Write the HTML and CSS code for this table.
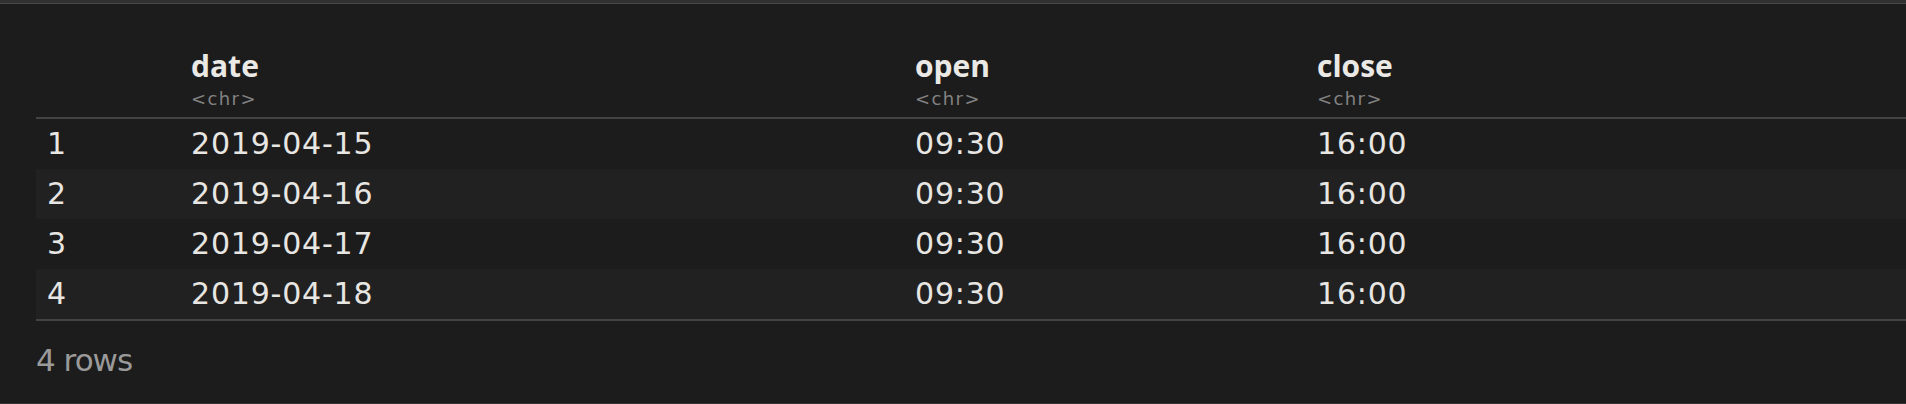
FILE: index.html
```html
<!DOCTYPE html>
<html lang="en">
<head>
  <meta charset="UTF-8" />
  <meta name="viewport" content="width=device-width, initial-scale=1" />
  <title>Data frame</title>
  <link rel="stylesheet" href="styles.css">
</head>
<body>

  <div class="top-bar"></div>

  <div class="frame">
    <div class="df-head">
      <div class="cell"></div>
      <div class="cell"><span class="col-name">date</span><span class="col-type">&lt;chr&gt;</span></div>
      <div class="cell"><span class="col-name">open</span><span class="col-type">&lt;chr&gt;</span></div>
      <div class="cell"><span class="col-name">close</span><span class="col-type">&lt;chr&gt;</span></div>
    </div>

    <div class="df-body">
      <div class="df-row">
        <div class="cell">1</div>
        <div class="cell">2019-04-15</div>
        <div class="cell">09:30</div>
        <div class="cell">16:00</div>
      </div>
      <div class="df-row">
        <div class="cell">2</div>
        <div class="cell">2019-04-16</div>
        <div class="cell">09:30</div>
        <div class="cell">16:00</div>
      </div>
      <div class="df-row">
        <div class="cell">3</div>
        <div class="cell">2019-04-17</div>
        <div class="cell">09:30</div>
        <div class="cell">16:00</div>
      </div>
      <div class="df-row">
        <div class="cell">4</div>
        <div class="cell">2019-04-18</div>
        <div class="cell">09:30</div>
        <div class="cell">16:00</div>
      </div>
    </div>

    <div class="df-footer">4 rows</div>
  </div>

</body>
</html>
```

FILE: styles.css
```css
/* Baseline */
* {
  margin: 0;
  padding: 0;
  box-sizing: border-box;
}
body {
  height: 404px;
  background: #1c1c1c;
  color: #e8e6e2;
  font-family: 'DejaVu Sans', sans-serif;
  overflow: hidden;
  border-bottom: 1px solid #333;
}

/* Strip at the very top */
.top-bar {
  height: 4px;
  background: #303030;
  border-bottom: 1px solid #474747;
}

.frame {
  padding-left: 36px;
}

/* Shared column layout */
.df-head,
.df-row {
  display: grid;
  grid-template-columns: 144px 724px 402px 1fr;
}
.cell {
  padding-left: 11px;
}

/* Header with column names + types */
.df-head {
  padding-top: 47px;
  padding-bottom: 6px;
  border-bottom: 2px solid #434343;
}
.df-head .cell {
  display: flex;
  flex-direction: column;
}
.col-name {
  font-family: 'Open Sans', sans-serif;
  font-weight: bold;
  font-size: 30px;
  line-height: 30px;
  color: #ebe9e5;
  padding-bottom: 6px;
}
.col-type {
  font-size: 18px;
  line-height: 24px;
  letter-spacing: 1.4px;
  color: #828282;
}

/* Rows */
.df-body {
  border-bottom: 2px solid #434343;
}
.df-row {
  height: 50px;
  font-size: 30px;
  line-height: 50px;
  letter-spacing: 0.8px;
}
.df-row:nth-child(even) {
  background: #212121;
}

/* Row count */
.df-footer {
  margin-top: 19px;
  font-size: 31px;
  line-height: 40px;
  letter-spacing: -1px;
  color: #9a9a9a;
}
```
